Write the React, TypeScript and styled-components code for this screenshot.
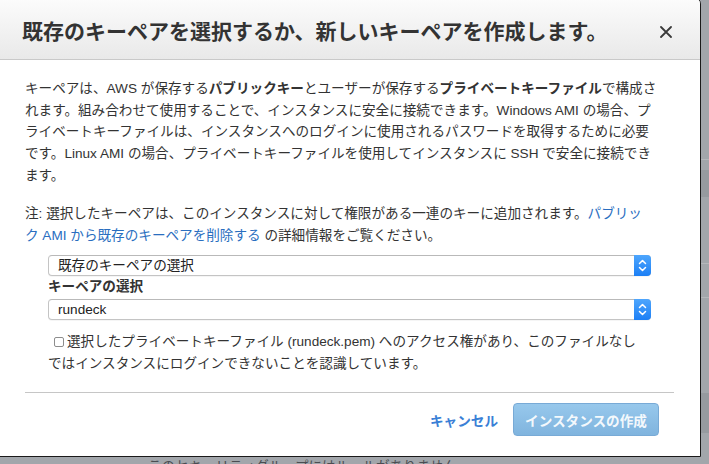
import React from "react";
import styled, { createGlobalStyle } from "styled-components";

const GlobalStyle = createGlobalStyle`
  html, body { margin: 0; padding: 0; }
  body {
    background: #a2a6ab;
    overflow: hidden;
    font-family: "Liberation Sans", "Noto Sans CJK JP", sans-serif;
  }
`;

const Page = styled.div`
  position: relative;
  width: 709px;
  height: 464px;
  overflow: hidden;
  background: #a2a6ab;
`;

const Backdrop = styled.div`
  display: flex;
  flex-direction: column;
`;

const BgRow = styled.div<{ $h: number; $band?: boolean; $line?: boolean }>`
  height: ${(p) => p.$h}px;
  flex: none;
  background: ${(p) => (p.$band ? "#969a9f" : "transparent")};
  border-bottom: ${(p) => (p.$line ? "1px solid #b4b7bb" : "none")};
  box-sizing: border-box;
`;

const BgText = styled.div`
  padding-left: 148px;
  margin-top: 1px;
  font-size: 13.5px;
  line-height: 20px;
  color: #4a4d52;
  white-space: nowrap;
`;

const Modal = styled.div`
  position: absolute;
  left: -1px;
  top: -3px;
  width: 702px;
  height: 460px;
  box-sizing: border-box;
  border: 1px solid #1a1a1a;
  border-radius: 0 7px 0 0;
  background: #fff;
  display: flex;
  flex-direction: column;
  overflow: hidden;
`;

const Header = styled.div`
  display: flex;
  align-items: center;
  justify-content: space-between;
  height: 62px;
  box-sizing: border-box;
  padding: 7px 28px 0 22px;
  background: linear-gradient(#fcfcfc, #e9e9e9);
  border-bottom: 1px solid #c9c9c9;
`;

const Title = styled.h1`
  margin: 0;
  font-size: 21px;
  line-height: 30px;
  font-weight: bold;
  color: #333;
  white-space: nowrap;
`;

const Close = styled.button`
  border: 0;
  background: none;
  padding: 0;
  width: 12px;
  height: 12px;
  display: flex;
  cursor: pointer;
`;

const Body = styled.div`
  padding: 18px 25px 0 25px;
  color: #333;
  font-size: 13.6px;
`;

const Para = styled.p<{ $gap?: number }>`
  margin: ${(p) => p.$gap ?? 0}px 0 0 0;
  line-height: 21.7px;
  white-space: nowrap;
`;

const Strong = styled.b`
  font-weight: bold;
`;

const Link = styled.a`
  color: #2a6ebf;
  text-decoration: none;
`;

const Form = styled.div`
  margin: 9px 24px 0 23px;
  display: flex;
  flex-direction: column;
`;

const Select = styled.div`
  height: 21px;
  box-sizing: border-box;
  display: flex;
  align-items: stretch;
  border: 1px solid #c4c4c4;
  border-top-color: #b9b9b9;
  border-radius: 4px;
  background: #fff;
  box-shadow: 0 1px 0 rgba(0, 0, 0, 0.04);
`;

const SelectValue = styled.span`
  flex: 1;
  padding-left: 9px;
  font-size: 13.6px;
  line-height: 19px;
  color: #222;
`;

const SelectArrow = styled.span`
  width: 17px;
  margin: -1px -1px -1px 0;
  border-radius: 0 4px 4px 0;
  background: linear-gradient(#4ea6fd, #1c7ff5);
  display: flex;
  align-items: center;
  justify-content: center;
`;

const Label = styled.div`
  margin-top: 0;
  margin-bottom: 2px;
  font-size: 13.6px;
  line-height: 21px;
  font-weight: bold;
  color: #333;
`;

const CheckText = styled.p`
  margin: 11px 0 0 0;
  line-height: 21.5px;
  text-indent: 6px;
  white-space: nowrap;
`;

const Box = styled.span`
  display: inline-block;
  width: 10px;
  height: 10px;
  box-sizing: border-box;
  border: 1px solid #8d8d8d;
  border-radius: 2px;
  background: #fff;
  margin-right: 3px;
  vertical-align: -1px;
  text-indent: 0;
`;

const Footer = styled.div`
  margin: 18px 26px 0 25px;
  border-top: 1px solid #c6c6c6;
  padding: 10px 15px 0 0;
  display: flex;
  justify-content: flex-end;
  align-items: center;
  gap: 15px;
`;

const Cancel = styled.a`
  color: #3a80d6;
  font-weight: bold;
  font-size: 13.6px;
  text-decoration: none;
`;

const Primary = styled.button`
  height: 33px;
  width: 146px;
  box-sizing: border-box;
  border: 1px solid #78aad6;
  border-radius: 4px;
  background: linear-gradient(#97c8ec, #80b4de);
  color: rgba(255, 255, 255, 0.92);
  font-family: inherit;
  font-weight: bold;
  font-size: 13.6px;
  padding: 0;
`;

const Chevrons = () => (
  <svg width="9" height="13" viewBox="0 0 9 13" fill="none">
    <path d="M1.5 4.5 L4.5 1.5 L7.5 4.5" stroke="#fff" strokeWidth="1.5" strokeLinecap="round" strokeLinejoin="round" />
    <path d="M1.5 8.5 L4.5 11.5 L7.5 8.5" stroke="#fff" strokeWidth="1.5" strokeLinecap="round" strokeLinejoin="round" />
  </svg>
);

export default function App() {
  return (
    <>
      <GlobalStyle />
      <Page>
        <Backdrop>
          <BgRow $h={160} $line />
          <BgRow $h={10} />
          <BgRow $h={27} $band />
          <BgRow $h={67} $line />
          <BgRow $h={34} $line />
          <BgRow $h={95} />
          <BgRow $h={40} $band />
          <BgRow $h={23} />
          <BgText>このセキュリティグループにはルールがありません</BgText>
        </Backdrop>
        <Modal role="dialog">
          <Header>
            <Title>既存のキーペアを選択するか、新しいキーペアを作成します。</Title>
            <Close aria-label="close">
              <svg width="12" height="12" viewBox="0 0 12 12">
                <path d="M1 1 L11 11 M11 1 L1 11" stroke="#3a3a3a" strokeWidth="1.8" strokeLinecap="round" />
              </svg>
            </Close>
          </Header>
          <Body>
            <Para>
              キーペアは、AWS が保存する<Strong>パブリックキー</Strong>とユーザーが保存する<Strong>プライベートキーファイル</Strong>で構成さ
              <br />
              れます。組み合わせて使用することで、インスタンスに安全に接続できます。Windows AMI の場合、プ
              <br />
              ライベートキーファイルは、インスタンスへのログインに使用されるパスワードを取得するために必要
              <br />
              です。Linux AMI の場合、プライベートキーファイルを使用してインスタンスに SSH で安全に接続でき
              <br />
              ます。
            </Para>
            <Para $gap={16.5}>
              注: 選択したキーペアは、このインスタンスに対して権限がある一連のキーに追加されます。
              <Link href="#">
                パブリッ
                <br />
                ク AMI から既存のキーペアを削除する
              </Link>{" "}
              の詳細情報をご覧ください。
            </Para>
            <Form>
              <Select>
                <SelectValue>既存のキーペアの選択</SelectValue>
                <SelectArrow>
                  <Chevrons />
                </SelectArrow>
              </Select>
              <Label>キーペアの選択</Label>
              <Select>
                <SelectValue>rundeck</SelectValue>
                <SelectArrow>
                  <Chevrons />
                </SelectArrow>
              </Select>
              <CheckText>
                <Box />
                選択したプライベートキーファイル (rundeck.pem) へのアクセス権があり、このファイルなし
                <br />
                ではインスタンスにログインできないことを認識しています。
              </CheckText>
            </Form>
          </Body>
          <Footer>
            <Cancel href="#">キャンセル</Cancel>
            <Primary disabled>インスタンスの作成</Primary>
          </Footer>
        </Modal>
      </Page>
    </>
  );
}
